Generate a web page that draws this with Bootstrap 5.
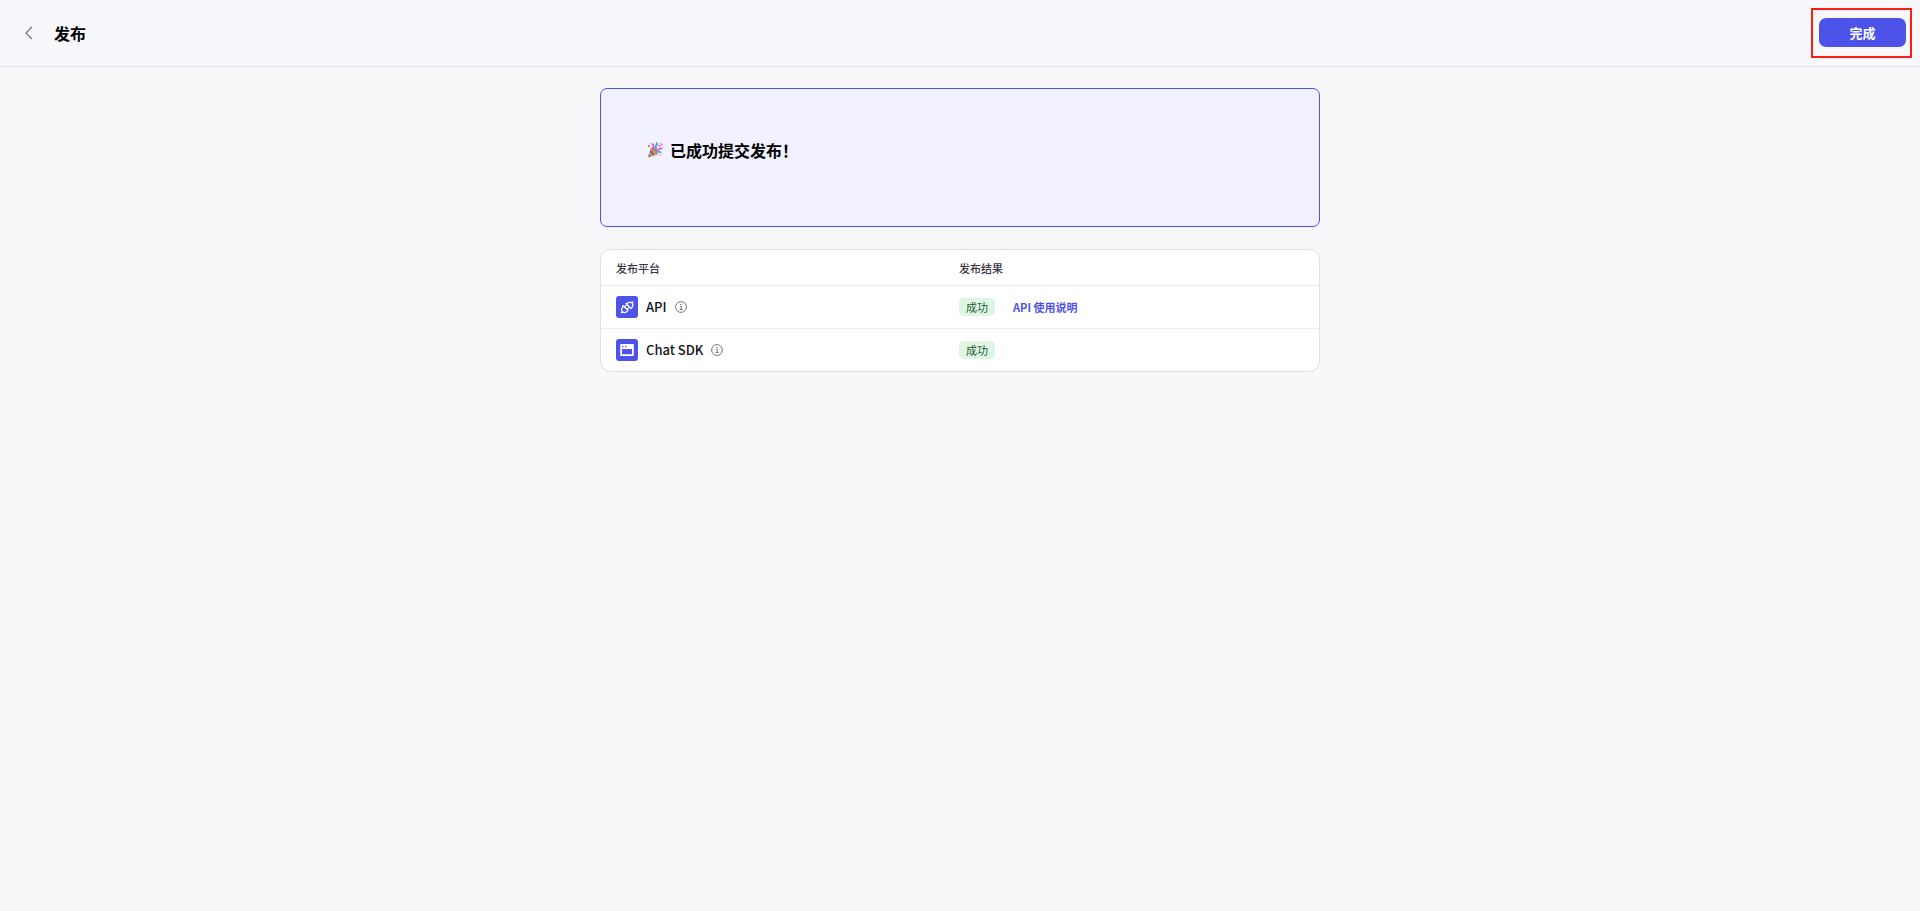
<!DOCTYPE html>
<html lang="zh-CN">
<head>
<meta charset="utf-8">
<meta name="viewport" content="width=device-width, initial-scale=1">
<title>发布</title>
<link href="https://cdn.jsdelivr.net/npm/bootstrap@5.3.0/dist/css/bootstrap.min.css" rel="stylesheet">
<style>
  :root { --brand: #4d53e8; }
  body { font-family: "Noto Sans CJK SC", sans-serif; background: #f7f7fa; color: #000; }
  .topbar { background: #f7f7fc; border-bottom: 1px solid #e1e1ee; padding: 18px 14px 19px 22px; }
  .heading { font-size: 16px; line-height: 22px; font-weight: 700; }
  .back-btn { width: 14px; height: 16px; color: #6b6b75; line-height: 0; }
  .back-btn svg { width: 14px; height: 14px; }
  .title-group { gap: 18px; }
  .done-btn { width: 87px; height: 29px; border-radius: 7px; background: var(--brand); color: #fff; font-size: 13px; line-height: 28px; font-weight: 700; }
  .done-btn:hover { background: #4248d0; color: #fff; }
  .highlight-frame { inset: -10px -6px -11px -8px; border: 2px solid #fb1c12; pointer-events: none; }
  .publish-body { max-width: 744px; padding: 21px 12px; }
  .success-panel { border: 1px solid var(--brand); border-radius: 7px; background: #f1f1ff; padding: 50px 46px; min-height: 139px; }
  .success-line { gap: 7px; }
  .party { width: 16px; height: 16px; }
  .result-panel { margin-top: 22px; border: 1px solid #e1e1e4; border-radius: 11px; background: #fff; }
  .result-table { --bs-table-bg: transparent; table-layout: fixed; border-collapse: separate; border-spacing: 0; font-size: 11px; line-height: 16px; }
  .result-table th, .result-table td { height: 43px; padding: 0 15px; border-bottom: 1px solid #ebebed; }
  .result-table thead th { height: 36px; font-weight: 500; color: #383743; vertical-align: middle; }
  .result-table tbody tr:last-child td { height: 42px; border-bottom: 0; }
  .col-platform { width: 343px; }
  .platform-icon { width: 22px; height: 22px; border-radius: 3px; }
  .platform-name { font-size: 13px; line-height: 20px; font-weight: 500; color: #0f1219; }
  .info { width: 12px; height: 12px; color: #68686f; }
  .status { width: 36px; height: 18px; line-height: 18px; border-radius: 5px; background: #e0f6e5; color: #175c32; text-align: center; }
  .guide-row { gap: 18px; }
  .guide { color: var(--brand); font-weight: 700; text-decoration: none; }
</style>
</head>
<body>
<svg class="d-none" aria-hidden="true">
  <symbol id="info" viewBox="0 0 12 12"><circle cx="6" cy="6" r="5.4" fill="none" stroke="currentColor" stroke-width=".9"/><path d="M5 5.3h1.200v3.200M4.700 8.500h2.800" fill="none" stroke="currentColor" stroke-width=".9"/><circle cx="5.900" cy="3.400" r=".7" fill="currentColor"/></symbol>
</svg>
<header class="topbar d-flex align-items-center justify-content-between">
  <div class="title-group d-flex align-items-center">
    <button type="button" class="back-btn btn p-0 border-0" aria-label="返回"><svg viewBox="0 0 14 14" fill="none" stroke="currentColor" stroke-width="1.1"><path d="M9.800 1 4 7l5.800 6"/></svg></button>
    <h1 class="heading mb-0">发布</h1>
  </div>
  <div class="position-relative d-flex">
    <button type="button" class="done-btn btn p-0 border-0">完成</button>
    <span class="highlight-frame position-absolute"></span>
  </div>
</header>
<main class="publish-body container-fluid mx-auto">
  <section class="success-panel">
    <div class="success-line d-flex align-items-center">
      <svg class="party" viewBox="0 0 16 16" aria-hidden="true">
        <path d="M4.200 5.200 .6 15.900 11.600 12z" fill="#f0a63a"/>
        <path d="m3.500 7.500-.8 2.600 3.200 3.500 2.100-.7zM2.100 11.800l-.7 2 1.200.9 1.500-.5z" fill="#5a68b5"/>
        <ellipse cx="7.400" cy="8.700" rx="2" ry="4.500" transform="rotate(-43 7.400 8.700)" fill="#d08d48"/>
        <path d="M6.200 8C7.200 5 6.800 3 5 1.600" fill="none" stroke="#ef4aa0" stroke-width="1.400"/>
        <path d="M7.500 8C10.300 6.500 7.800 4.600 9.200 3.400c1.200-.8.4-2 .9-2.800" fill="none" stroke="#41a8ee" stroke-width="2.200"/>
        <path d="M8.300 9.200c1.700-3 3.800-1 4.500-2.200.6-1 1.600-.5 2.600-.8" fill="none" stroke="#ef4aa0" stroke-width="1.600"/>
        <path d="M9 10.300c2-1.400 3.200-.9 5.400.3" fill="none" stroke="#41a8ee" stroke-width="1.600"/>
        <g fill="#f5559f"><path d="M1 3h1.900v1.700H1zM11.200 3.600l1.700-1 .7 1.300-1.600.8zM13.800 1.700h1.600v1.500h-1.600z"/></g>
        <g fill="#f4b64c"><path d="M2.700.5h1.500v1.300H2.700zM12.300.4h1.400v1.300h-1.400zM12.800 12h1.600v1.500h-1.600z"/></g>
      </svg>
      <h2 class="heading mb-0">已成功提交发布！</h2>
    </div>
  </section>
  <section class="result-panel overflow-hidden">
    <table class="result-table table align-middle mb-0">
      <thead><tr><th scope="col" class="col-platform">发布平台</th><th scope="col">发布结果</th></tr></thead>
      <tbody>
        <tr>
          <td><div class="d-flex align-items-center gap-2">
            <svg class="platform-icon" viewBox="0 0 22 22" aria-hidden="true"><rect width="22" height="22" fill="#4d53e8"/><g fill="none" stroke="#fff" stroke-width="1.2" stroke-linejoin="round" stroke-linecap="round"><path d="m7 9.500 5 5-1.300 1.200c-1.400 1.200-3 1.200-4.200.1-1.200-1.200-1.200-2.900 0-4.200zM10 7.500l5 5 1-1.200c1.200-1.400 1-3 0-4.100-1.200-1.200-2.900-1.200-4.200-.1zM15.900 7.100 17 6M6.400 15.800 5.300 16.900M8.500 11l1.500-1.500M11 13.500l1.500-1.500"/></g></svg>
            <span class="platform-name">API</span>
            <svg class="info" role="img" aria-label="说明"><use href="#info"/></svg>
          </div></td>
          <td><div class="guide-row d-flex align-items-center"><span class="status">成功</span><a href="#" class="guide">API 使用说明</a></div></td>
        </tr>
        <tr>
          <td><div class="d-flex align-items-center gap-2">
            <svg class="platform-icon" viewBox="0 0 22 22" aria-hidden="true"><rect width="22" height="22" fill="#4d53e8"/><path fill="#fff" fill-rule="evenodd" d="M5.200 5h11.600c.6 0 1 .4 1 1v10c0 .6-.4 1-1 1H5.200c-.6 0-1-.4-1-1V6c0-.6.4-1 1-1zM6 10v5.200h10V10zM6 7v1.300h1.500V7zm3 0v1.300h1.500V7z"/></svg>
            <span class="platform-name">Chat SDK</span>
            <svg class="info" role="img" aria-label="说明"><use href="#info"/></svg>
          </div></td>
          <td><div class="d-flex"><span class="status">成功</span></div></td>
        </tr>
      </tbody>
    </table>
  </section>
</main>
<script src="https://cdn.jsdelivr.net/npm/bootstrap@5.3.0/dist/js/bootstrap.bundle.min.js"></script>
</body>
</html>
